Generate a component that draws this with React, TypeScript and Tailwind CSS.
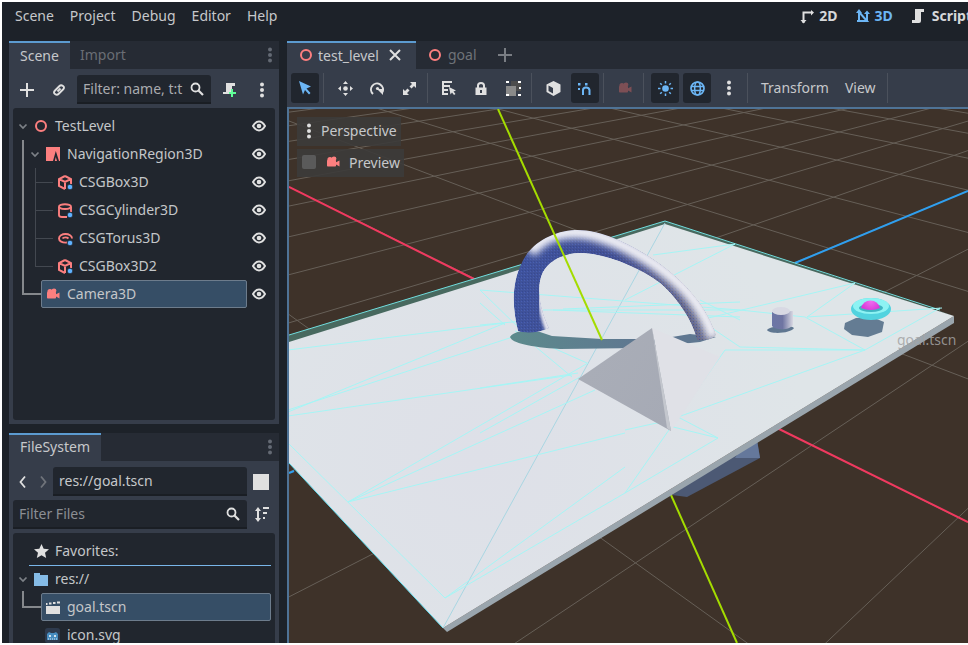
import React from "react";

const RED = "#fc7f7f";
const WH = "#e0e0e0";

type P = { c?: string; s?: number };

const Ring = () => (
  <svg width="14" height="14" viewBox="0 0 14 14" className="shrink-0"><circle cx="7" cy="7" r="5" fill="none" stroke={RED} strokeWidth="2" /></svg>
);
const Eye = () => (
  <svg width="14" height="14" viewBox="0 0 14 14" className="shrink-0">
    <path d="M1 7C3 3.600 5 2.600 7 2.600S11 3.600 13 7C11 10.400 9 11.400 7 11.400S3 10.400 1 7Z" fill="none" stroke={WH} strokeWidth="2" />
    <circle cx="7" cy="7" r="2.300" fill={WH} />
  </svg>
);
const Chev = ({ c = "#7d8187" }: P) => (
  <svg width="12" height="12" viewBox="0 0 12 12" className="shrink-0"><path d="M2.500 4.500 6 8l3.500-3.500" fill="none" stroke={c} strokeWidth="1.700" /></svg>
);
const Badge = () => <circle cx="12" cy="12" r="2.800" fill="#5fb2ff" stroke="#21262e" strokeWidth=".8" />;
const CsgBox = () => (
  <svg width="15" height="15" viewBox="0 0 15 15" className="shrink-0">
    <path d="M7 1 13 4V9M7 1 1 4V11L7 14M1 4 7 7 13 4M7 7V14" fill="none" stroke={RED} strokeWidth="2" />
    <Badge />
  </svg>
);
const CsgCyl = () => (
  <svg width="15" height="15" viewBox="0 0 15 15" className="shrink-0">
    <path d="M1 4V12Q1 14 4 14H9M13 4V9" fill="none" stroke={RED} strokeWidth="1.900" />
    <ellipse cx="7" cy="3.600" rx="6" ry="2.400" fill="none" stroke={RED} strokeWidth="1.900" />
    <Badge />
  </svg>
);
const CsgTorus = () => (
  <svg width="15" height="15" viewBox="0 0 15 15" className="shrink-0">
    <path d="M9 11.500C4 12 1 10 1 7.500S4 3 7.500 3 14 5 14 7.500" fill="none" stroke={RED} strokeWidth="1.900" />
    <path d="M4.500 7.500C5.500 6 9 6 10.500 7.500" fill="none" stroke={RED} strokeWidth="1.800" />
    <Badge />
  </svg>
);
const Camera = ({ c = RED }: P) => (
  <svg width="14" height="14" viewBox="0 0 14 14" className="shrink-0">
    <circle cx="4" cy="4.600" r="2.600" fill={c} /><circle cx="8" cy="3.800" r="2.400" fill={c} />
    <rect x="1" y="5" width="9" height="6.500" rx=".8" fill={c} />
    <path d="M10 7.200 13.500 5.400V11.500L10 9.400Z" fill={c} />
  </svg>
);
const Nav = () => (
  <svg width="14" height="14" viewBox="0 0 14 14" className="shrink-0">
    <rect width="14" height="14" fill={RED} />
    <path d="M7 14 9.800 4 13 14H11L9.800 10 8.800 14Z" fill="#21262e" />
  </svg>
);
const Dots = ({ c = WH }: P) => (
  <svg width="6" height="16" viewBox="0 0 6 16" className="shrink-0">
    <circle cx="3" cy="2.500" r="2" fill={c} /><circle cx="3" cy="8" r="2" fill={c} /><circle cx="3" cy="13.500" r="2" fill={c} />
  </svg>
);
const Search = ({ c = WH }: P) => (
  <svg width="14" height="14" viewBox="0 0 14 14" className="shrink-0">
    <circle cx="5.500" cy="5.500" r="4" fill="none" stroke={c} strokeWidth="1.800" /><path d="M8.500 8.500 13 13" stroke={c} strokeWidth="2.200" />
  </svg>
);
const Plus = ({ c = WH, s = 14 }: P) => (
  <svg width={s} height={s} viewBox="0 0 14 14" className="shrink-0"><path d="M7 0V14M0 7H14" stroke={c} strokeWidth="2" /></svg>
);
const Link = () => (
  <svg width="14" height="14" viewBox="0 0 14 14" className="shrink-0">
    <path d="M5.500 8.500 8.500 5.500M5 5.500 7.500 3Q9 1.500 11 3T11 6.500L8.500 9M9 8.500 6.500 11Q5 12.500 3 11T3 7.500L5.500 5" fill="none" stroke={WH} strokeWidth="1.900" />
  </svg>
);
const ScriptAdd = () => (
  <svg width="15" height="15" viewBox="0 0 15 15" className="shrink-0">
    <path d="M4 1H13V4H10V7H9V12H1V10H4Z" fill={WH} />
    <path d="M11 7V10H14V12H11V15H9V12H7V10H9V7Z" fill="#5fff97" />
  </svg>
);
const ScriptIcon = () => (
  <svg width="14" height="16" viewBox="0 0 14 16" className="shrink-0">
    <path d="M4 1H13V4H10V13Q10 15 8 15H1V12H4Z" fill={WH} />
  </svg>
);
const Icon2D = () => (
  <svg width="14" height="15" viewBox="0 0 14 15" className="shrink-0">
    <path d="M3.500 14V3.500H11" fill="none" stroke={WH} strokeWidth="2" />
    <path d="M0.500 11H6.500L3.500 14.500ZM11 1V6.500L14 3.500Z" fill={WH} />
  </svg>
);
const Icon3D = () => (
  <svg width="14" height="15" viewBox="0 0 14 15" className="shrink-0">
    <path d="M3 3 11 12H1M3 3V11M11 12V5" fill="none" stroke="#6cb6f5" strokeWidth="2" />
    <path d="M0 4 3 0 6 4ZM8 5H14L11 1.500Z" fill="#6cb6f5" />
  </svg>
);
const Arrow = () => (
  <svg width="16" height="16" viewBox="0 0 16 16" className="shrink-0"><path d="M2 1 14 6.500 9.500 8.500 13.500 13 12 14.500 8 10 6 14.500Z" fill="#6cb6f5" /></svg>
);
const Move = () => (
  <svg width="15" height="15" viewBox="0 0 15 15" className="shrink-0">
    <circle cx="7.500" cy="7.500" r="2.300" fill={WH} />
    <path d="M7.500 0 10 3H5ZM7.500 15 5 12H10ZM0 7.500 3 5V10ZM15 7.500 12 10V5Z" fill={WH} />
  </svg>
);
const Rotate = () => (
  <svg width="15" height="15" viewBox="0 0 15 15" className="shrink-0">
    <path d="M3 13A6 6 0 1 1 12.500 11" fill="none" stroke={WH} strokeWidth="2" />
    <path d="M8 9H14V15Z" fill={WH} transform="translate(-1 -1)" />
    <circle cx="7.500" cy="7.500" r="1.600" fill={WH} />
  </svg>
);
const Scale = () => (
  <svg width="15" height="15" viewBox="0 0 15 15" className="shrink-0">
    <path d="M8 1H14V7L12 5 9.500 7.500 7.500 5.500 10 3ZM1 8V14H7L5 12 7.500 9.500 5.500 7.500 3 10Z" fill={WH} />
  </svg>
);
const ListSel = () => (
  <svg width="16" height="16" viewBox="0 0 16 16" className="shrink-0">
    <path d="M1 1H11V3H3V5H9V7H3V9H7V11H3V13H7V15H1Z" fill={WH} />
    <path d="M8 7 15 10.500 12.500 11.500 14.500 14 13 15 11 12.500 9.500 14.500Z" fill={WH} />
  </svg>
);
const Lock = () => (
  <svg width="14" height="15" viewBox="0 0 14 15" className="shrink-0">
    <path d="M4 7V4.500Q4 2 7 2T10 4.500V7" fill="none" stroke={WH} strokeWidth="2" />
    <path d="M1.500 6.500H12.500V14H1.500ZM6 9V12H8V9Z" fill={WH} fillRule="evenodd" />
  </svg>
);
const Group = () => (
  <svg width="15" height="15" viewBox="0 0 15 15" className="shrink-0">
    <rect x="0" y="5" width="10" height="10" fill="#8a8a8a" /><rect x="5" y="0" width="10" height="10" fill="#4c4c4c" />
    <rect x="5" y="5" width="5" height="5" fill="#8a8a8a" />
    <path d="M0 0H3V2H0ZM12 0H15V2H12ZM0 13H3V15H0ZM12 13H15V15H12ZM13 6H15V8H13Z" fill="#ffffff" />
  </svg>
);
const Cube = () => (
  <svg width="15" height="15" viewBox="0 0 15 15" className="shrink-0">
    <path d="M7.500 0 14.500 3.500V11L7.500 15 .5 11V3.500ZM2.500 4.500 7 7V12.500L2.500 10Z" fill={WH} fillRule="evenodd" />
  </svg>
);
const Magnet = () => (
  <svg width="16" height="16" viewBox="0 0 16 16" className="shrink-0">
    <path d="M6 15V10Q6 7.500 9 7.500T12.500 10V15" fill="none" stroke="#6cb6f5" strokeWidth="2" />
    <rect x="1" y="3" width="2.500" height="2.500" fill="#6cb6f5" /><rect x="8" y="3" width="2.500" height="2.500" fill="#6cb6f5" />
    <rect x="1" y="8" width="2" height="2" fill="#6cb6f5" />
  </svg>
);
const Sun = () => (
  <svg width="15" height="15" viewBox="0 0 15 15" className="shrink-0">
    <circle cx="7.500" cy="7.500" r="3.300" fill="#6cb6f5" />
    <path d="M7.500 0V2.500M7.500 12.500V15M0 7.500H2.500M12.500 7.500H15M2.200 2.200 3.800 3.800M11.200 11.200 12.800 12.800M2.200 12.800 3.800 11.200M11.200 3.800 12.800 2.200" stroke="#6cb6f5" strokeWidth="1.500" />
  </svg>
);
const Globe = () => (
  <svg width="15" height="15" viewBox="0 0 15 15" className="shrink-0">
    <circle cx="7.500" cy="7.500" r="6.500" fill="none" stroke="#6cb6f5" strokeWidth="1.700" />
    <ellipse cx="7.500" cy="7.500" rx="2.800" ry="6.500" fill="none" stroke="#6cb6f5" strokeWidth="1.500" />
    <path d="M1 5.500H14M1 9.500H14" stroke="#6cb6f5" strokeWidth="1.400" />
  </svg>
);
const Star = () => (
  <svg width="15" height="14" viewBox="0 0 15 14" className="shrink-0"><path d="M7.500 0 9.700 4.700 15 5.300 11 8.800 12.200 14 7.500 11.300 2.800 14 4 8.800 0 5.300 5.300 4.700Z" fill={WH} /></svg>
);
const Folder = () => (
  <svg width="14" height="13" viewBox="0 0 14 13" className="shrink-0"><path d="M0 0H6V2H14V13H0Z" fill="#85bbe6" /></svg>
);
const Clapper = () => (
  <svg width="14" height="13" viewBox="0 0 14 13" className="shrink-0">
    <path d="M0 5H14V13H0Z" fill={WH} />
    <path d="M0 2H1.500V4H0ZM3 1.500H5.500V3.500H3ZM7 1H9.500V3H7ZM11 .5H14V2.500H11Z" fill={WH} />
  </svg>
);
const GodotIcon = () => (
  <svg width="15" height="15" viewBox="0 0 15 15" className="shrink-0">
    <rect width="15" height="15" rx="2.500" fill="#2e3a4d" />
    <path d="M2 6 4 4 6 5H9L11 4 13 6V12H2Z" fill="#478cbf" />
    <circle cx="5" cy="8" r="1" fill="#fff" /><circle cx="10" cy="8" r="1" fill="#fff" />
    <path d="M3 11H12" stroke="#fff" strokeWidth=".8" strokeDasharray="1 1" />
  </svg>
);
const Sort = () => (
  <svg width="15" height="15" viewBox="0 0 15 15" className="shrink-0">
    <path d="M4 2V13" stroke={WH} strokeWidth="2" />
    <path d="M1 4 4 0 7 4ZM1 11H7L4 15Z" fill={WH} />
    <path d="M9 1H15M9 6H13M9 11H11" stroke={WH} strokeWidth="2" />
  </svg>
);

const Row = ({ className = "", children, eye = true }: { className?: string; children: React.ReactNode; eye?: boolean }) => (
  <div className={`flex h-7 items-center pr-[9px] ${className}`}>
    <div className="flex min-w-0 flex-1 items-center">{children}</div>
    {eye && <Eye />}
  </div>
);

const Label = ({ children, className = "ml-[7px]" }: { children: React.ReactNode; className?: string }) => (
  <span className={`whitespace-nowrap text-[14px] leading-none text-[#c4c6c9] ${className}`}>{children}</span>
);

const ToolBtn = ({ children, on = false }: { children: React.ReactNode; on?: boolean }) => (
  <div className={`flex h-[30px] w-7 shrink-0 items-center justify-center rounded-[3px] ${on ? "bg-[#21262e]" : ""}`}>{children}</div>
);
const Sep = ({ className = "ml-1 mr-[7px]" }: { className?: string }) => <div className={`h-[30px] w-px shrink-0 bg-[#4b515c] ${className}`} />;

const Input = ({ className = "", children }: { className?: string; children: React.ReactNode }) => (
  <div className={`flex h-[29px] items-center overflow-hidden rounded-t-[3px] border-b-2 border-[#1a1e24] bg-[#21262e] ${className}`}>{children}</div>
);

/* floor grid: two line families meeting at their vanishing points */
const O = [603, 342];
const VA = [1564, -56];
const VB = [-285, -97];
const onAxis = (v: number[], t: number, k: number) => [O[0] + ((v[0] - O[0]) * t) / (t + k), O[1] + ((v[1] - O[1]) * t) / (t + k)];
const through = (v: number[], p: number[]) => [v[0], v[1], p[0] + (p[0] - v[0]) * 6, p[1] + (p[1] - v[1]) * 6];
const grid: number[][] = [];
for (let t = -8; t <= 40; t++) {
  grid.push(through(VA, onAxis(VB, t, 10.5)));
  if (t >= -5) grid.push(through(VB, onAxis(VA, t, 6.5)));
}

const mesh: string[] = [
  "288,350 505,323", "288,412 505,323", "288,410 525,333", "288,416 572,375", "288,443 445,598", "445,598 625,493",
  "445,598 625,467", "348,502 588,363", "348,502 595,390", "348,502 625,433", "518,332 572,377", "515,331 587,363",
  "480,290 523,332", "480,303 505,325", "480,325 523,321", "543,310 740,310", "553,310 740,317", "563,309 740,302", "480,290 740,310",
  "480,388 578,373", "480,433 580,377", "735,244 653,255", "625,300 735,244", "855,283 807,317", "855,283 700,320", "807,317 942,308",
  "740,347 865,350", "805,317 865,350", "865,350 940,308", "725,350 865,350", "678,417 865,350", "678,417 718,438", "678,417 725,350",
  "625,430 670,420", "625,493 678,417", "657,423 718,438", "718,438 625,493", "740,310 805,317", "700,320 740,347", "700,300 740,320",
  "640,262 660,283", "688,300 700,320",
];

const ARCH = "M518,331 C513,310 510,285 523,260 C532,243 553,231 575,230 C600,229 630,244 650,257 C675,273 705,300 716,335 C712,340 702,341 697,340 C694,325 680,300 660,283 C640,268 610,255 583,253 C565,252 550,260 543,272 C535,288 541,312 549,328 C540,333 525,334 518,331Z";

const Scene3D = () => (
  <svg viewBox="289 109 679 534" className="block h-full w-full" preserveAspectRatio="xMinYMin slice">
    <defs>
      <radialGradient id="pl" gradientUnits="userSpaceOnUse" cx="480" cy="460" r="330">
        <stop offset="0" stopColor="#dee0e8" /><stop offset="1" stopColor="#dfe5e8" />
      </radialGradient>
      <linearGradient id="ar" gradientUnits="userSpaceOnUse" x1="515" y1="280" x2="720" y2="320">
        <stop offset="0" stopColor="#3f539c" /><stop offset=".45" stopColor="#434f90" /><stop offset=".75" stopColor="#5e6086" /><stop offset="1" stopColor="#6f7088" />
      </linearGradient>
      <linearGradient id="sh" gradientUnits="userSpaceOnUse" x1="510" y1="340" x2="640" y2="340">
        <stop offset="0" stopColor="#5c8a8c" /><stop offset="1" stopColor="#5f7791" />
      </linearGradient>
      <linearGradient id="py" gradientUnits="userSpaceOnUse" x1="590" y1="370" x2="670" y2="420">
        <stop offset="0" stopColor="#a9adb7" /><stop offset="1" stopColor="#a6aab5" />
      </linearGradient>
      <linearGradient id="cy" gradientUnits="userSpaceOnUse" x1="772" y1="320" x2="793" y2="320">
        <stop offset="0" stopColor="#6c76a6" /><stop offset=".5" stopColor="#6f75a2" /><stop offset="1" stopColor="#d8d8e2" />
      </linearGradient>
      <radialGradient id="dm" gradientUnits="userSpaceOnUse" cx="871" cy="301" r="10">
        <stop offset="0" stopColor="#f070f0" /><stop offset="1" stopColor="#d93bd9" />
      </radialGradient>
      <pattern id="dither" width="3" height="3" patternUnits="userSpaceOnUse">
        <rect width="1" height="1" fill="#2c3f8f" /><rect x="2" y="1" width="1" height="1" fill="#4d68c8" />
      </pattern>
      <clipPath id="ac"><path d={ARCH} /></clipPath>
      <filter id="b3" x="-20%" y="-20%" width="140%" height="140%"><feGaussianBlur stdDeviation="3.500" /></filter>
      <filter id="b2" x="-20%" y="-20%" width="140%" height="140%"><feGaussianBlur stdDeviation="1.800" /></filter>
    </defs>
    <rect x="289" y="109" width="679" height="534" fill="#3e3229" />
    {grid.map((g, i) => (
      <line key={i} x1={g[0]} y1={g[1]} x2={g[2]} y2={g[3]} stroke="#665f57" strokeWidth="1" />
    ))}
    {/* axes behind the plate */}
    <path d="M289,187 480,282" stroke="#f0395f" strokeWidth="2" />
    <path d="M775,427 968,522" stroke="#f0395f" strokeWidth="2" />
    <path d="M795,263 968,191" stroke="#2f9fef" strokeWidth="2" />
    <path d="M671,495 737,643" stroke="#a4dc00" strokeWidth="2" />
    <path d="M289,473 294,471" stroke="#2f9fef" strokeWidth="2" />
    {/* box under the plate */}
    <path d="M757,440 760,458 687,497 672,495 720,462Z" fill="#4c5974" />
    <path d="M757,440 760,458 735,458 742,448Z" fill="#65789b" />
    {/* plate */}
    <path d="M289,335 665,221 940,311 954,316 665,230 289,345Z" fill="#48695f" />
    <path d="M289,335 665,221 940,310" fill="none" stroke="#71dede" strokeWidth="1" />
    <path d="M954,316 954,323 447,632 443,628Z" fill="#9aa5ad" />
    <path d="M665,224 954,316 443,628 289,463 289,342Z" fill="url(#pl)" />
    <path d="M443,628 289,463" stroke="#63dff0" strokeWidth="1" />
    <path d="M443,628 665,223" stroke="#a9d6e2" strokeWidth="1" />
    {mesh.map((m, i) => (
      <polyline key={i} points={m} fill="none" stroke="#a6f5f5" strokeWidth="1" />
    ))}
    {/* arch shadow */}
    <path d="M510,337C515,330 530,330 540,332L552,336 602,339 660,339 690,334 716,337 700,342 640,348 560,349C530,347 512,343 510,337Z" fill="url(#sh)" />
    {/* arch */}
    <g clipPath="url(#ac)">
      <path d={ARCH} fill="url(#ar)" />
      <path d={ARCH} fill="url(#dither)" opacity=".55" />
      <path d="M530,252C540,238 555,232 575,232 605,232 650,256 680,284 697,300 708,320 714,338" fill="none" stroke="#f0f0f6" strokeWidth="13" filter="url(#b3)" />
      <path d="M541,296C541,310 545,322 549,332" fill="none" stroke="#e6e6ee" strokeWidth="6" filter="url(#b2)" />
    </g>
    <path d="M498,109 602,340" stroke="#a4dc00" strokeWidth="2" />
    {/* pyramid */}
    <path d="M652,328 720,357 671,431Z" fill="#e0e1e7" />
    <path d="M652,328 578,379 671,431Z" fill="url(#py)" />
    <path d="M652,328 671,431 667,428Z" fill="#c4c7ce" />
    {/* cylinder */}
    <path d="M767,330C770,326 790,324 794,328 792,333 770,335 767,330Z" fill="#5f7791" />
    <path d="M772,312V326C776,331 790,330 793,325V311Z" fill="url(#cy)" />
    <ellipse cx="781" cy="311" rx="9" ry="4" fill="#d8d9e3" />
    {/* goal */}
    <path d="M845,323 856,318 872,317 884,322 882,332 868,337 852,335 844,329Z" fill="#647c93" />
    <ellipse cx="871" cy="309" rx="20" ry="11" fill="#52d3df" />
    <ellipse cx="871" cy="306" rx="18" ry="8" fill="#8df3f3" />
    <ellipse cx="871" cy="308" rx="12" ry="4" fill="#3fb5c2" />
    <path d="M861,308A10,11 0 0 1 880,308Q871,312 861,308Z" fill="url(#dm)" />
  </svg>
);

export default function App() {
  return (
    <div className="h-[645px] w-[968px] overflow-hidden bg-white pb-[2px] pl-[2px] pt-[2px] font-['Noto_Sans',sans-serif]">
      <div className="flex h-full w-full flex-col bg-[#1d2229]">
        {/* menu bar */}
        <div className="flex h-[39px] shrink-0 items-start justify-between pt-[6px]">
          <div className="ml-[13px] flex gap-[16px] text-[14px] leading-[16px] text-[#c6c8cb]">
            <span>Scene</span><span>Project</span><span>Debug</span><span>Editor</span><span>Help</span>
          </div>
          <div className="-mr-[4px] flex items-center text-[14px] font-bold leading-[16px] text-[#d6d8da]">
            <Icon2D /><span className="ml-[5px]">2D</span>
            <span className="ml-[19px]"><Icon3D /></span><span className="ml-[4px] text-[#6cb6f5]">3D</span>
            <span className="ml-[18px]"><ScriptIcon /></span><span className="ml-[7px]">Script</span>
          </div>
        </div>

        <div className="flex min-h-0 flex-1">
          {/* left docks */}
          <div className="ml-[7px] flex w-[270px] shrink-0 flex-col">
            <div className="flex h-[383px] flex-col bg-[#363d4a]">
              <div className="flex h-7 shrink-0 items-stretch bg-[#262b34]">
                <div className="flex w-[61px] items-center justify-center border-t-2 border-[#5c9bd0] bg-[#363d4a] pb-[2px] text-[14px] text-[#c6c8cb]">Scene</div>
                <div className="ml-[10px] flex items-center pb-[1px] text-[14px] text-[#6a6e75]">Import</div>
                <div className="ml-auto mr-[6px] flex items-center"><Dots c="#646a74" /></div>
              </div>
              <div className="flex h-[39px] shrink-0 items-center pt-[2px]">
                <div className="ml-[11px]"><Plus s={14} /></div>
                <div className="ml-[18px]"><Link /></div>
                <Input className="ml-[11px] w-[134px] pl-[6px]">
                  <span className="w-[100px] overflow-hidden whitespace-nowrap text-[14px] text-[#a9abaf]">Filter: name, t:t</span>
                  <span className="ml-[7px]"><Search /></span>
                </Input>
                <div className="ml-[11px]"><ScriptAdd /></div>
                <div className="ml-[22px]"><Dots /></div>
              </div>
              <div className="relative mx-1 mb-1 min-h-0 flex-1 rounded-[3px] bg-[#21262e] pt-1">
                <div className="absolute left-[9px] top-[32px] h-[155px] w-[2px] bg-[#85888c]" />
                <div className="absolute left-[9px] top-[185px] h-[2px] w-[19px] bg-[#85888c]" />
                <div className="absolute left-[22px] top-[60px] h-[98px] w-px bg-[#434850]" />
                <div className="absolute left-[22px] top-[74px] h-px w-[18px] bg-[#434850]" />
                <div className="absolute left-[22px] top-[102px] h-px w-[18px] bg-[#434850]" />
                <div className="absolute left-[22px] top-[130px] h-px w-[18px] bg-[#434850]" />
                <div className="absolute left-[22px] top-[158px] h-px w-[18px] bg-[#434850]" />
                <Row className="pl-1"><Chev /><span className="ml-[5px]"><Ring /></span><Label>TestLevel</Label></Row>
                <Row className="pl-[16px]"><Chev /><span className="ml-[5px]"><Nav /></span><Label>NavigationRegion3D</Label></Row>
                <Row className="pl-[45px]"><CsgBox /><Label className="ml-[6px]">CSGBox3D</Label></Row>
                <Row className="pl-[45px]"><CsgCyl /><Label className="ml-[6px]">CSGCylinder3D</Label></Row>
                <Row className="pl-[45px]"><CsgTorus /><Label className="ml-[6px]">CSGTorus3D</Label></Row>
                <Row className="pl-[45px]"><CsgBox /><Label className="ml-[6px]">CSGBox3D2</Label></Row>
                <Row>
                  <div className="ml-[28px] mr-[5px] flex h-7 flex-1 items-center rounded-[2px] border border-[#6d7c8c] bg-[#364e66] pl-1">
                    <Camera /><Label>Camera3D</Label>
                  </div>
                </Row>
              </div>
            </div>

            <div className="mt-[9px] flex min-h-0 flex-1 flex-col overflow-hidden bg-[#363d4a]">
              <div className="flex h-7 shrink-0 items-stretch bg-[#262b34]">
                <div className="flex w-[92px] items-center justify-center border-t-2 border-[#5c9bd0] bg-[#363d4a] pb-[3px] text-[14px] text-[#c6c8cb]">FileSystem</div>
                <div className="ml-auto mr-[6px] flex items-center"><Dots c="#646a74" /></div>
              </div>
              <div className="mt-[6px] flex shrink-0 items-center">
                <svg width="12" height="14" viewBox="0 0 12 14" className="ml-2 shrink-0"><path d="M8 1.500 3.500 7 8 12.500" fill="none" stroke={WH} strokeWidth="1.800" /></svg>
                <svg width="12" height="14" viewBox="0 0 12 14" className="ml-2 shrink-0"><path d="M4 1.500 8.500 7 4 12.500" fill="none" stroke="#70747b" strokeWidth="1.800" /></svg>
                <Input className="ml-[4px] w-[194px] pl-[6px]"><span className="text-[14px] text-[#c6c8cb]">res://goal.tscn</span></Input>
                <div className="ml-[6px] h-4 w-4 bg-[#e0e0e0]" />
              </div>
              <div className="mt-[4px] flex shrink-0 items-center">
                <Input className="ml-1 w-[234px] pl-[6px]">
                  <span className="flex-1 text-[14px] text-[#8b8e93]">Filter Files</span>
                  <span className="mr-[7px]"><Search /></span>
                </Input>
                <div className="ml-[7px]"><Sort /></div>
              </div>
              <div className="mx-1 mt-1 min-h-0 flex-1 rounded-t-[3px] bg-[#21262e] pt-1">
                <Row eye={false} className="pl-[21px]"><Star /><Label className="ml-[6px]">Favorites:</Label></Row>
                <div className="ml-4 mr-1 h-px bg-[#79b6ea]" />
                <Row eye={false} className="-mt-px pl-1"><Chev /><span className="ml-[5px]"><Folder /></span><Label>res://</Label></Row>
                <div className="relative pl-[28px] pr-1">
                  <div className="absolute left-[9px] -top-[2px] h-[16px] w-[2px] bg-[#85888c]" />
                  <div className="absolute left-[9px] top-[13px] h-[2px] w-[19px] bg-[#85888c]" />
                  <div className="flex h-7 items-center rounded-[2px] border border-[#6d7c8c] bg-[#364e66] pl-1"><Clapper /><Label>goal.tscn</Label></div>
                </div>
                <Row eye={false} className="pl-[32px]"><GodotIcon /><Label>icon.svg</Label></Row>
              </div>
            </div>
          </div>

          {/* main area */}
          <div className="ml-2 flex min-w-0 flex-1 flex-col">
            <div className="flex h-7 shrink-0 items-stretch bg-[#262b34]">
              <div className="flex w-[129px] items-center border-t-2 border-[#5c9bd0] bg-[#363d4a] pb-[2px] pl-[12px]">
                <Ring /><span className="ml-[5px] text-[14px] text-[#c6c8cb]">test_level</span>
                <span className="ml-[10px]"><svg width="12" height="12" viewBox="0 0 12 12"><path d="M1 1 11 11M11 1 1 11" stroke={WH} strokeWidth="2" /></svg></span>
              </div>
              <div className="ml-[12px] flex items-center pb-[1px]">
                <Ring /><span className="ml-[6px] text-[14px] text-[#6f7379]">goal</span>
                <span className="ml-[21px]"><Plus c="#797d83" s={14} /></span>
              </div>
            </div>
            <div className="flex h-[38px] shrink-0 items-start bg-[#363d4a] pl-1 pt-1">
              <ToolBtn on><Arrow /></ToolBtn>
              <Sep />
              <div className="flex gap-1"><ToolBtn><Move /></ToolBtn><ToolBtn><Rotate /></ToolBtn><ToolBtn><Scale /></ToolBtn></div>
              <Sep />
              <div className="flex gap-1"><ToolBtn><ListSel /></ToolBtn><ToolBtn><Lock /></ToolBtn><ToolBtn><Group /></ToolBtn></div>
              <Sep />
              <div className="flex gap-1"><ToolBtn><Cube /></ToolBtn><ToolBtn on><Magnet /></ToolBtn></div>
              <Sep />
              <ToolBtn><Camera c="#7d4f55" /></ToolBtn>
              <Sep />
              <div className="flex gap-1"><ToolBtn on><Sun /></ToolBtn><ToolBtn on><Globe /></ToolBtn><ToolBtn><Dots /></ToolBtn></div>
              <Sep className="ml-1 mr-[13px]" />
              <span className="text-[14px] leading-[30px] text-[#c6c8cb]">Transform</span>
              <span className="ml-4 text-[14px] leading-[30px] text-[#c6c8cb]">View</span>
              <Sep className="ml-[11px]" />
            </div>
            <div className="relative min-h-0 flex-1 overflow-hidden border-l-2 border-t-2 border-[#4f7396]">
              <Scene3D />
              <div className="absolute left-[8px] top-[8px] flex h-[29px] w-[104px] items-center bg-[#3c3b3a]/90 pb-[2px] pl-[9px]">
                <Dots /><span className="ml-[9px] text-[14px] text-[#c6c8cb]">Perspective</span>
              </div>
              <div className="absolute left-[8px] top-[40px] flex h-[28px] w-[107px] items-center bg-[#3c3b3a]/90 pb-[2px] pl-[5px]">
                <div className="h-[14px] w-[14px] rounded-[2px] bg-[#5a5a5a]" />
                <span className="ml-[10px]"><Camera /></span>
                <span className="ml-[9px] text-[14px] text-[#c6c8cb]">Preview</span>
              </div>
              <span className="absolute left-[608px] top-[220px] text-[14px] text-[#a3a3a3]/85">goal.tscn</span>
            </div>
          </div>
        </div>
      </div>
    </div>
  );
}
